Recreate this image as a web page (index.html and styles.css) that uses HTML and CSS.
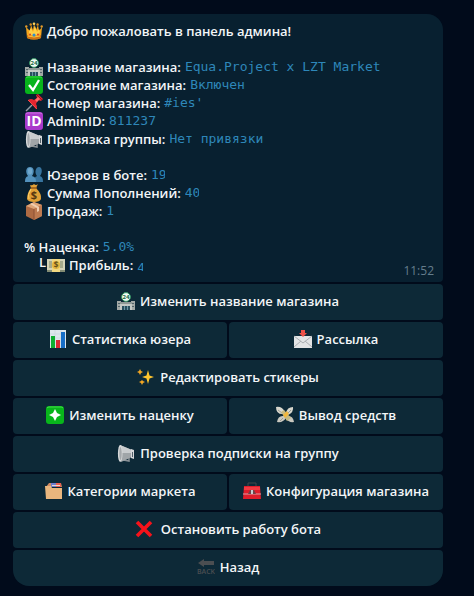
FILE: index.html
```html
<!DOCTYPE html>
<html lang="ru">
<head>
  <meta charset="UTF-8" />
  <meta name="viewport" content="width=device-width, initial-scale=1.0" />
  <title>Панель админа</title>
  <link rel="stylesheet" href="styles.css">
</head>
<body>

  <!-- Иконки -->
  <svg class="sprite" aria-hidden="true">
    <symbol id="i-crown" viewBox="0 0 18 18">
      <path d="M1 5l4 4 1-6 2 5 1-6 2 6 2-5 1 6 3-4-1 11q-7 3-14 0z" fill="#f5a51d" />
      <path d="M4 9l2-3 2 4 2-6 2 6 2-3 1 2-1 4H4z" fill="#ffcf45" />
      <path d="M2 13q7 3 14 0v3q-7 3-14 0z" fill="#cf7415" />
      <path d="M3 14q6 2 12 0" stroke="#ffc63c" fill="none" />
      <circle cx="1.3" cy="4.5" r="1.2" fill="#e39a2a" />
      <circle cx="5.7" cy="2.5" r="1.2" fill="#d98a1c" />
      <circle cx="9" cy="1.7" r="1.3" fill="#ffd257" />
      <circle cx="12.6" cy="2.5" r="1.2" fill="#d98a1c" />
      <circle cx="16.7" cy="4.5" r="1.2" fill="#e39a2a" />
      <circle cx="9" cy="13" r="1.5" fill="#2c91d4" />
      <circle cx="5" cy="12.5" r="1" fill="#d63c2a" />
      <circle cx="13" cy="12.5" r="1" fill="#d63c2a" />
    </symbol>
    <symbol id="i-shop" viewBox="0 0 18 18">
      <path d="M0 9h4v9H0zM14 9h4v9h-4z" fill="#a3a9a6" />
      <path d="M1 11h2v1H1zM1 14h2v1H1zM15 11h2v1h-2zM15 14h2v1h-2z" fill="#53656a" />
      <path d="M3 10h12v8H3z" fill="#c3c9c5" />
      <path d="M3 10h12v2H3z" fill="#8f9996" />
      <path d="M5 14h8v4H5z" fill="#28505e" />
      <path d="M7 14h1v4H7zM10 14h1v4h-1z" fill="#6995a4" />
      <circle cx="9" cy="5" r="4.400" fill="#f1faf4" stroke="#329764" />
      <text x="9" y="7" font-size="6" font-weight="700" text-anchor="middle" fill="#176843">24</text>
    </symbol>
    <symbol id="i-check" viewBox="0 0 18 18">
      <rect width="18" height="18" rx="3" fill="#07b41b" />
      <path d="M1 2q1-1 2-1h12q1 0 2 1" fill="none" stroke="#36d640" />
      <path d="M4 9l4 5 6-10" fill="none" stroke="#fff" stroke-width="2.3" />
    </symbol>
    <symbol id="i-pin" viewBox="0 0 18 18">
      <path d="M7 11l-6 6" stroke="#929ca4" stroke-width="1.4" />
      <path d="M3 6q3-2 6 0l3-2-1-3 2-1 5 5-2 2-3-1-2 4q2 3 0 5z" fill="#e32630" />
      <path d="M10 6l3-3 2 2-3 3z" fill="#ff6b68" />
      <path d="M3 6l9 9" stroke="#fa4747" />
      <path d="M12 1l5 5" stroke="#9f121f" />
    </symbol>
    <symbol id="i-id" viewBox="0 0 18 18">
      <rect width="18" height="18" rx="3" fill="#a93acb" />
      <path d="M1 2q1-1 2-1h12q1 0 2 1" fill="none" stroke="#ca70df" />
      <text x="9" y="14" font-size="14" font-weight="700" text-anchor="middle" fill="#fff">ID</text>
    </symbol>
    <symbol id="i-horn" viewBox="0 0 18 18">
      <path d="M6 12l1 4 5 1v-3" fill="none" stroke="#8a9196" stroke-width="1.5" />
      <path d="M3 1l12 5v7L4 18z" fill="#a0a5a8" />
      <path d="M3 1l12 5v3L4 9z" fill="#c9ccce" />
      <ellipse cx="3.200" cy="9.500" rx="2.300" ry="8.500" fill="#d6d8d9" />
      <ellipse cx="3.500" cy="9.500" rx="1.200" ry="6.500" fill="#a4a8ab" />
      <path d="M14 5l3 1v9l-3-1z" fill="#d5d7d9" />
      <path d="M15 8h1v5h-1z" fill="#51606a" />
    </symbol>
    <symbol id="i-users" viewBox="0 0 18 18">
      <path d="M9 16c0-4 1-5 3-6-3-4-1-9 2-9s4 5 1 9c2 1 3 2 3 6z" fill="#37749f" />
      <path d="M0 16c0-4 1-5 3-6C0 6 1 1 5 1s5 5 2 9c3 1 4 2 4 6z" fill="#5392bd" />
      <path d="M3 3q2-2 4 0v4q-2 3-4 0z" fill="#70a8cc" />
    </symbol>
    <symbol id="i-bag" viewBox="0 0 18 18">
      <path d="M6 4L5 1q2 1 4-1 2 2 4 0l-2 4q6 6 5 11-1 3-7 3t-7-3Q2 9 6 4z" fill="#e0a137" />
      <path d="M6 5q-4 6-2 10" fill="none" stroke="#ffd36c" />
      <path d="M6 4h6" stroke="#93581b" stroke-width="1.5" />
      <text x="9" y="15" font-size="11" font-weight="700" text-anchor="middle" fill="#553711">$</text>
    </symbol>
    <symbol id="i-box" viewBox="0 0 18 18">
      <path d="M1 4l8-4 8 3v11l-8 4-8-4z" fill="#ad6a43" />
      <path d="M1 4l8-4 8 3-8 4z" fill="#dda477" />
      <path d="M9 7l8-4v11l-8 4z" fill="#bd7a50" />
      <path d="M5 2l7 4v4l2-1V5L7 1z" fill="#f0ceb0" />
      <path d="M9 7v11" stroke="#8c5034" />
    </symbol>
    <symbol id="i-cash" viewBox="0 0 18 18">
      <path d="M0 4h18v12H0z" fill="#838c74" />
      <path d="M0 3h18v11H0z" fill="#d4d3b8" />
      <path d="M2 5h14v7H2z" fill="#a5aa8c" />
      <path d="M5 3h8v13H5z" fill="#f1d780" />
      <circle cx="9" cy="9" r="4" fill="#e2b640" />
      <text x="9" y="12" font-size="8" font-weight="700" text-anchor="middle" fill="#69511b">$</text>
    </symbol>
    <symbol id="i-chart" viewBox="0 0 18 18">
      <path d="M1 0h16v18H1z" fill="#dfe7ed" />
      <path d="M1 4h16M1 8h16M1 12h16M6 0v18M12 0v18" stroke="#cfdbe3" />
      <path d="M2 6h4v12H2z" fill="#10ad32" />
      <path d="M7 10h4v8H7z" fill="#dc2734" />
      <path d="M12 2h4v16h-4z" fill="#176ec7" />
    </symbol>
    <symbol id="i-mail" viewBox="0 0 18 18">
      <path d="M0 6h18v12H0z" fill="#e3e4e5" />
      <path d="M0 17l7-6M18 17l-7-6M0 6l9 7 9-7" fill="none" stroke="#aaaeb2" />
      <path d="M7 0h4v3h2L9 7 5 3h2z" fill="#ee5148" />
    </symbol>
    <symbol id="i-stars" viewBox="0 0 18 18">
      <path d="M11 2l1.500 5.500L17 9l-4.500 1.500L11 16l-1.500-5.500L5 9l4.500-1.500z" fill="#ffc52e" />
      <path d="M3 1l1 2 2 1-2 1-1 2-1-2-2-1 2-1zM5 12l1 1 2 1-2 1-1 2-1-2-2-1 2-1z" fill="#f3a622" />
    </symbol>
    <symbol id="i-plus" viewBox="0 0 18 18">
      <rect width="18" height="18" rx="3" fill="#08b51b" />
      <path d="M1 2q1-1 2-1h12q1 0 2 1" fill="none" stroke="#42d94a" />
      <path d="M9 3l2 4 4 2-4 2-2 4-2-4-4-2 4-2z" fill="#fff" />
    </symbol>
    <symbol id="i-fly" viewBox="0 0 18 18">
      <path d="M8 8Q0 9 0 1q6-1 9 5zM10 7q1-6 7-6 1 5-5 8z" fill="#d8d7cd" />
      <path d="M8 10q-6-1-7 6 6 1 9-4zM11 10q6-1 7 6-5 1-9-4z" fill="#c9c8bf" />
      <path d="M2 4l4 3M15 4l-3 3M4 15l3-3" stroke="#9a9b91" />
      <path d="M5 6l3-2 7 8-4 3z" fill="#c5b981" />
      <path d="M7 9l4-4 2 3-4 4z" fill="#f0b63d" />
    </symbol>
    <symbol id="i-folder" viewBox="0 0 18 18">
      <path d="M1 5l3-4h12l1 4z" fill="#d38c61" />
      <path d="M6 1h5v4H6z" fill="#6c7dcc" />
      <path d="M11 1h5v4h-5z" fill="#e65f50" />
      <path d="M7 3h8v1H7z" fill="#ead8cf" />
      <path d="M0 4h6l1 2h10v11H1z" fill="#e9b67e" />
    </symbol>
    <symbol id="i-kit" viewBox="0 0 18 18">
      <path d="M5 4V1h8v3" fill="none" stroke="#45464b" />
      <path d="M1 4h16l1 13H0z" fill="#df1d2b" />
      <path d="M1 5h16v3H1z" fill="#f33a42" />
      <path d="M0 12h18" stroke="#d9a0a4" />
      <path d="M5 12l2-4h4l2 4z" fill="#6f4047" />
      <path d="M8 8h2v4H8z" fill="#c6cace" />
    </symbol>
    <symbol id="i-cross" viewBox="0 0 18 18">
      <path d="M2 2l14 14M16 2L2 16" stroke="#f6121a" stroke-width="3.6" />
    </symbol>
    <symbol id="i-back" viewBox="0 0 18 18">
      <path d="M1 5l6-4v2h10v4H7v2z" fill="#4b4e51" />
      <text x="9" y="16" font-size="7" font-weight="600" text-anchor="middle" fill="#4b4e51">BACK</text>
    </symbol>
  </svg>

  <main class="chat">
    <section class="message">
      <p><svg class="icon"><use href="#i-crown" /></svg>Добро пожаловать в панель админа!</p>
      <br>
      <p><svg class="icon"><use href="#i-shop" /></svg>Название магазина: <code>Equa.Project x LZT Market</code></p>
      <p><svg class="icon"><use href="#i-check" /></svg>Состояние магазина: <code>Включен</code></p>
      <p><svg class="icon"><use href="#i-pin" /></svg>Номер магазина: <code>#ies'</code></p>
      <p><svg class="icon"><use href="#i-id" /></svg>AdminID: <code>811237</code></p>
      <p><svg class="icon"><use href="#i-horn" /></svg>Привязка группы: <code>Нет привязки</code></p>
      <br>
      <p><svg class="icon"><use href="#i-users" /></svg>Юзеров в боте: <code class="cut">19</code></p>
      <p><svg class="icon"><use href="#i-bag" /></svg>Сумма Пополнений: <code class="cut">40</code></p>
      <p><svg class="icon"><use href="#i-box" /></svg>Продаж: <code>1</code></p>
      <br>
      <p class="percent">% Наценка: <code>5.0%</code></p>
      <p class="profit"><span class="branch">L</span><svg class="icon"><use href="#i-cash" /></svg>Прибыль: <code class="cut cut-half">4</code></p>
      <time class="time">11:52</time>
    </section>

    <div class="keyboard">
      <button class="key wide"><svg class="icon"><use href="#i-shop" /></svg>Изменить название магазина</button>
      <button class="key"><svg class="icon"><use href="#i-chart" /></svg>Статистика юзера</button>
      <button class="key"><svg class="icon"><use href="#i-mail" /></svg>Рассылка</button>
      <button class="key wide"><svg class="icon"><use href="#i-stars" /></svg>Редактировать стикеры</button>
      <button class="key"><svg class="icon"><use href="#i-plus" /></svg>Изменить наценку</button>
      <button class="key"><svg class="icon"><use href="#i-fly" /></svg>Вывод средств</button>
      <button class="key wide"><svg class="icon"><use href="#i-horn" /></svg>Проверка подписки на группу</button>
      <button class="key"><svg class="icon"><use href="#i-folder" /></svg>Категории маркета</button>
      <button class="key"><svg class="icon"><use href="#i-kit" /></svg>Конфигурация магазина</button>
      <button class="key wide stop"><svg class="icon"><use href="#i-cross" /></svg>Остановить работу бота</button>
      <button class="key wide last"><svg class="icon"><use href="#i-back" /></svg>Назад</button>
    </div>
  </main>

</body>
</html>
```
FILE: styles.css
```css
* {
  box-sizing: border-box;
}

body {
  margin: 0;
  min-height: 100vh;
  background: #010b1b;
  color: #f3f6f8;
  font: 600 13px/18px "Open Sans", "Noto Sans", sans-serif;
}

.sprite {
  display: none;
}

.chat {
  padding: 14px 31px 10px 13px;
}

.message {
  position: relative;
  padding: 8px 11px;
  background: #082030;
  border-radius: 16px 16px 4px 4px;
}

.message p {
  display: flex;
  align-items: center;
  gap: 4px;
  margin: 0;
  padding-left: 1px;
  height: 18px;
}

.message .percent {
  padding-left: 0;
}

.message .profit {
  padding-left: 15px;
}

.branch {
  align-self: flex-start;
  width: 8px;
  margin-right: -4px;
  line-height: 12px;
}

.icon {
  flex: none;
  width: 18px;
  height: 18px;
}

code {
  color: #2e87b9;
  font: 400 13px/18px "DejaVu Sans Mono", monospace;
}

/* values are partly hidden */
.cut {
  width: 14px;
  overflow: hidden;
}

.cut-half {
  width: 6px;
  height: 12px;
}

.time {
  position: absolute;
  right: 9px;
  bottom: 2px;
  color: #647d8c;
  font-size: 12px;
  font-weight: 400;
}

.keyboard {
  display: grid;
  grid-template-columns: 1fr 1fr;
  gap: 2px;
  margin-top: 2px;
}

.key {
  display: flex;
  align-items: center;
  justify-content: center;
  gap: 5px;
  height: 36px;
  padding: 0 0 2px;
  border: none;
  border-radius: 4px;
  background: #0d2937;
  color: inherit;
  font: inherit;
  white-space: nowrap;
  cursor: pointer;
}

.key:hover {
  background: #143444;
}

.wide {
  grid-column: span 2;
}

.stop {
  gap: 8px;
}

.last {
  border-radius: 4px 4px 16px 16px;
}
```
